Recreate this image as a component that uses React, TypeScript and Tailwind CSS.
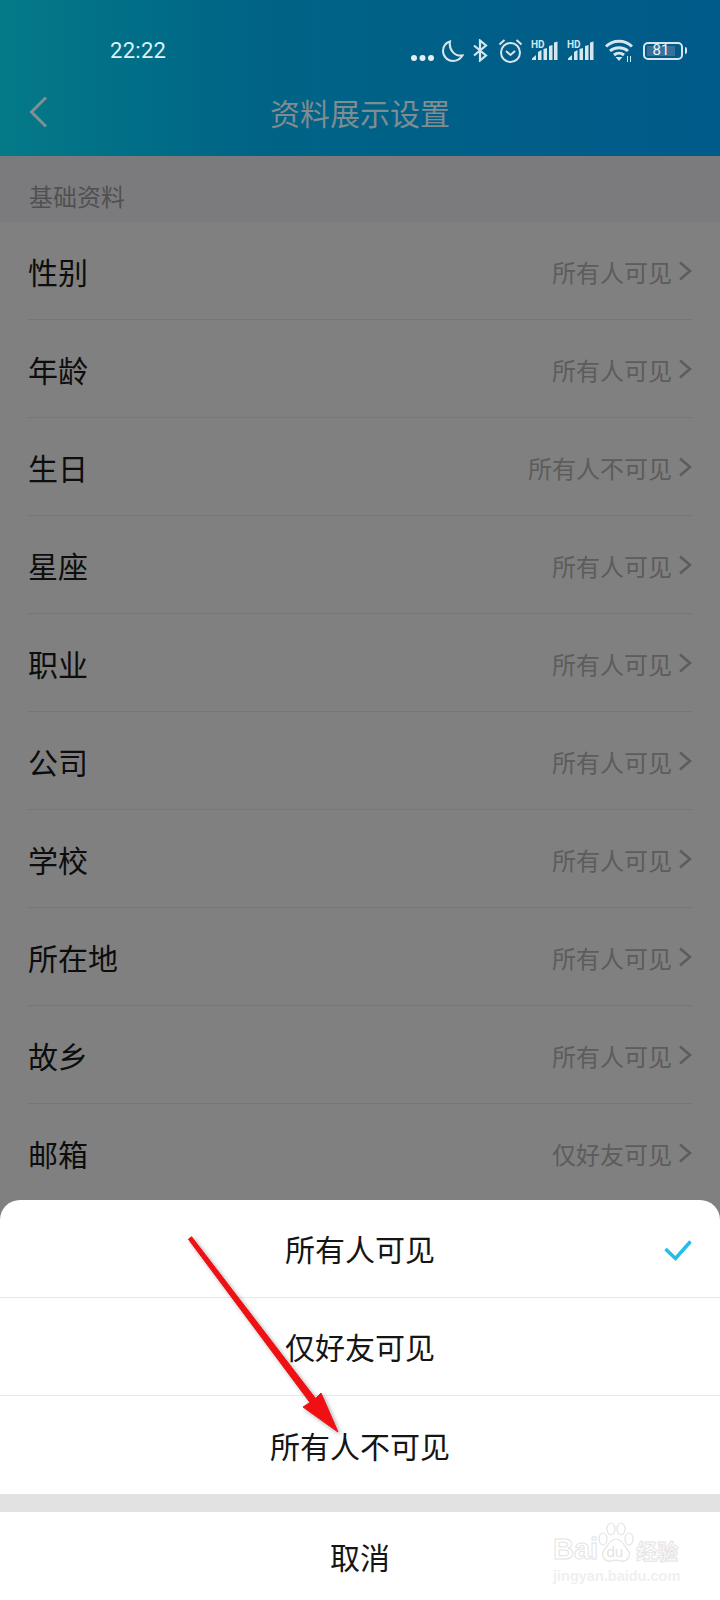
const FONT = "font-['Noto_Sans_CJK_SC','Noto_Sans',sans-serif]";

const ROWS = [
  ["性别", "所有人可见"],
  ["年龄", "所有人可见"],
  ["生日", "所有人不可见"],
  ["星座", "所有人可见"],
  ["职业", "所有人可见"],
  ["公司", "所有人可见"],
  ["学校", "所有人可见"],
  ["所在地", "所有人可见"],
  ["故乡", "所有人可见"],
  ["邮箱", "仅好友可见"],
];

const Signal = () => (
  <svg width="27" height="21" viewBox="0 0 27 21" fill="#d5e6ee">
    <text x="0" y="8" fontSize="10" fontWeight="700" fontFamily="Roboto, sans-serif">HD</text>
    <path d="M1 20v-1.500l4-3.500v5zM7 20v-8l3.500-2v10zM12.500 20V9l3.500-1v12zM18 20V6l3.500-1v15zM23 20V2.500l3.500-1V20z" />
  </svg>
);

function StatusIcons() {
  return (
    <div className="flex items-center">
      <svg width="23" height="6" viewBox="0 0 23 6" className="mt-[14px]" fill="#e4eff4">
        <circle cx="3" cy="3" r="3" />
        <circle cx="11.500" cy="3" r="3" />
        <circle cx="20" cy="3" r="3" />
      </svg>
      <svg width="22" height="22" viewBox="0 0 22 22" className="ml-[8px]" fill="none" stroke="#d5e6ee" strokeWidth="2">
        <path d="M8 1.500C3.500 3 1 6.500 1 11c0 5.500 4.500 10 10 10 4 0 7.500-2.500 9.500-5.500C13 16.500 6.500 10 8 1.500z" />
      </svg>
      <svg width="15" height="23" viewBox="0 0 15 23" className="ml-[9px]" fill="none" stroke="#d5e6ee" strokeWidth="2.200">
        <path d="M1 6.500l12 10-6 5V1.500l6 5-12 10" />
      </svg>
      <svg width="25" height="25" viewBox="0 0 25 25" className="ml-[10px]" fill="none" stroke="#d5e6ee" strokeWidth="2">
        <circle cx="12.500" cy="14.500" r="9.500" />
        <path d="M8 13l4.500 4 4.500-4M1.500 6.500l5-4.500M23.500 6.500l-5-4.500" />
      </svg>
      <div className="ml-[8px]"><Signal /></div>
      <div className="ml-[9px]"><Signal /></div>
      <svg width="28" height="23" viewBox="0 0 28 23" className="ml-[11px]" fill="none" stroke="#d5e6ee" strokeWidth="3">
        <path d="M1 7.500c7-7 19-7 26 0M5 12c5-4.500 13-4.500 18 0M9 16c3-2.500 7-2.500 10 0" />
        <path d="M10.500 18h7l-3.500 4z" fill="#d5e6ee" stroke="none" />
        <path d="M22.500 17v6M25.500 17v6" strokeWidth="1" />
      </svg>
      <div className="ml-[10px] flex items-center">
        <div className="flex h-[18px] w-[40px] items-center rounded-[5px] border-2 border-[#d5e6ee] p-[2px]">
          <div className="flex h-full w-[28px] items-center justify-center rounded-[1px] bg-[#3a7098] font-['Roboto',sans-serif] text-[15px] leading-none text-[#eef5f8]">
            81
          </div>
        </div>
        <div className="ml-[2px] h-[7px] w-[2px] rounded-r-sm bg-[#d5e6ee]" />
      </div>
    </div>
  );
}

function Header() {
  return (
    <header className="h-[156px] bg-gradient-to-r from-[#047a88] via-[#006486] via-35% to-[#005a8a]">
      <div className="flex h-[78px] items-start justify-between pl-[110px] pr-[33px] pt-[38px]">
        <span className="font-['Roboto',sans-serif] text-[22px] leading-[26px] font-normal tracking-[0.3px] text-[#dff2f5]">
          22:22
        </span>
        <StatusIcons />
      </div>
      <div className="relative flex h-[68px] items-center justify-center">
        <svg width="19" height="32" viewBox="0 0 19 32" className="absolute left-[29px] top-[18px]" fill="none" stroke="#7f8f92" strokeWidth="3">
          <path d="M17 1.500L2.500 16 17 30.500" />
        </svg>
        <h1 className={`${FONT} text-[30px] leading-none font-normal text-[#7f8c90]`}>资料展示设置</h1>
      </div>
    </header>
  );
}

function SettingsList() {
  return (
    <section className="bg-[#808080]">
      <div className={`${FONT} flex h-[66px] items-center bg-[#7b7b7d] pl-[29px] pt-[13px] text-[24px] text-[#505052]`}>基础资料</div>
      {ROWS.map(([label, value]) => (
        <div key={label} className="pl-[28px] pr-[28px]">
          <div className={`${FONT} flex h-[98px] items-center justify-between border-b border-[#777777] pt-[2px]`}>
            <span className="text-[30px] text-[#0d0d0d]">{label}</span>
            <span className="flex items-center text-[24px] text-[#5c5c5c]">
              {value}
              <svg width="16" height="20" viewBox="0 0 16 20" className="ml-[5px] -mt-[2px] -mr-[1px]" fill="none" stroke="#5c5c5c" strokeWidth="2.500">
                <path d="M3 1.500L13 10 3 18.500" />
              </svg>
            </span>
          </div>
        </div>
      ))}
    </section>
  );
}

function ActionSheet() {
  const item = `${FONT} relative flex items-center justify-center text-[30px] text-[#151515]`;
  const outline = "text-white [-webkit-text-stroke:1px_#e4e4e4]";
  return (
    <div className="absolute inset-x-0 bottom-0 h-[400px] overflow-hidden rounded-t-[20px] bg-white">
      <div className={`${item} h-[98px] border-b border-[#e8e8e8]`}>
        所有人可见
        <svg width="28" height="21" viewBox="0 0 28 21" className="absolute right-[28px] top-[40px]" fill="none" stroke="#22bdeb" strokeWidth="3.500">
          <path d="M1.500 9l10 9.500L26.500 1.500" />
        </svg>
      </div>
      <div className={`${item} h-[98px] border-b border-[#e8e8e8]`}>仅好友可见</div>
      <div className={`${item} h-[98px]`}>所有人不可见</div>
      <div className="h-[18px] bg-[#e3e2e3]" />
      <div className={`${item} h-[88px]`}>取消</div>

      {/* watermark */}
      <div className="absolute left-[553px] top-[322px] flex w-[130px] flex-col items-start">
        <div className="flex h-[42px] items-end">
          <span className={`font-['Liberation_Sans',sans-serif] text-[29px] leading-[30px] font-bold ${outline}`}>Bai</span>
          <svg width="36" height="42" viewBox="0 0 36 42" fill="none" stroke="#e4e4e4" strokeWidth="1.200">
            <ellipse cx="13" cy="7" rx="4" ry="6" />
            <ellipse cx="23" cy="7" rx="4" ry="6" />
            <ellipse cx="5" cy="17" rx="4" ry="6" />
            <ellipse cx="31" cy="17" rx="4" ry="6" />
            <path d="M18 17c-6 0-8 7-12 11-4 6 1 12 7 11 3-1 7-1 10 0 6 1 11-5 7-11-4-4-6-11-12-11z" />
            <text x="8.500" y="35" fontSize="15" fontFamily="Liberation Sans, sans-serif" fill="#e4e4e4" stroke="none">du</text>
          </svg>
          <span className={`${FONT} ml-[2px] text-[21px] leading-[28px] font-bold ${outline}`}>经验</span>
        </div>
        <span className="mt-[3px] font-['Liberation_Sans',sans-serif] text-[14.500px] leading-[18px] font-bold whitespace-nowrap text-[#f0f0f0]">
          jingyan.baidu.com
        </span>
      </div>
    </div>
  );
}

export default function App() {
  return (
    <div className="relative h-[1600px] w-[720px] overflow-hidden bg-[#808080]">
      <Header />
      <SettingsList />
      <ActionSheet />
      {/* red annotation arrow drawn over the screenshot */}
      <svg width="720" height="1600" viewBox="0 0 720 1600" className="pointer-events-none absolute inset-0 drop-shadow-[2px_2px_2px_rgba(0,0,0,0.35)]">
        <path
          d="M188.400 1239.200L191.600 1236.800L315.500 1398.500L321 1393L338 1432L303 1407L310 1402.500Z"
          fill="#f00f12"
          stroke="#f00f12"
          strokeWidth="1"
          strokeLinejoin="round"
        />
      </svg>
    </div>
  );
}
